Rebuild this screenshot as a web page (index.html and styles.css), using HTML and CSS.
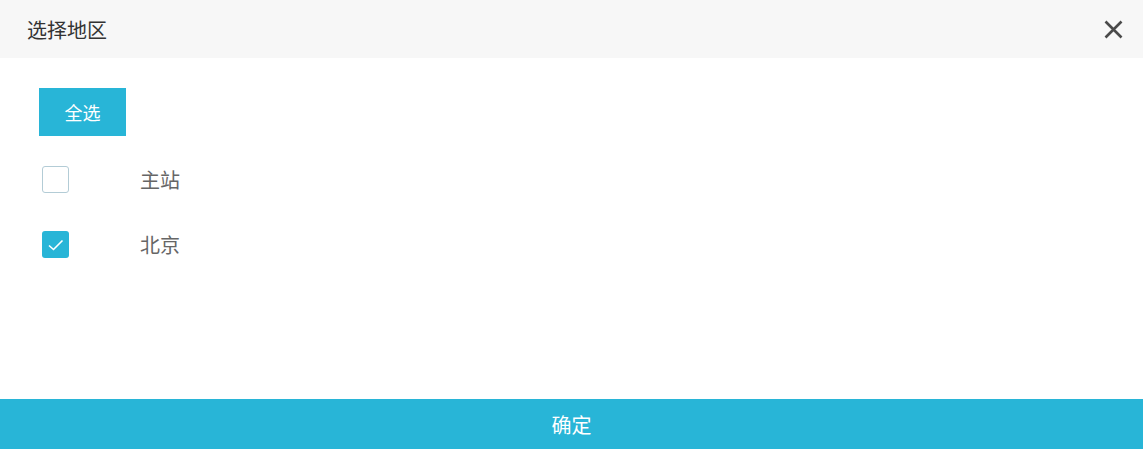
FILE: index.html
```html
<!DOCTYPE html>
<html lang="zh">
<head>
<meta charset="utf-8">
<link rel="stylesheet" href="styles.css">
</head>
<body>
<div class="dialog">
  <div class="header">
    <span class="title">选择地区</span>
    <svg class="close" width="19" height="19" viewBox="0 0 19 19"><path d="M1.5 1.5 L17.5 17.5 M17.5 1.5 L1.5 17.5" stroke="#4a4a4a" stroke-width="2.6"/></svg>
  </div>
  <div class="body">
    <button class="select-all">全选</button>
    <div class="row">
      <span class="box"></span>
      <span class="label">主站</span>
    </div>
    <div class="row">
      <span class="box checked"><svg width="27" height="27" viewBox="0 0 27 27"><path d="M7 14.5 L11.5 18.5 L20.5 9.5" fill="none" stroke="#fff" stroke-width="1.6"/></svg></span>
      <span class="label">北京</span>
    </div>
  </div>
  <div class="footer">确定</div>
</div>
</body>
</html>
```
FILE: styles.css
```css
html, body {
  margin: 0;
  padding: 0;
  background: #fff;
}
body {
  font-family: "Noto Sans CJK SC", "Liberation Sans", sans-serif;
}
.dialog {
  width: 1143px;
  height: 449px;
  display: flex;
  flex-direction: column;
}
.header {
  height: 58px;
  background: #f7f7f7;
  display: flex;
  align-items: center;
  justify-content: space-between;
  padding: 0 20px 0 27px;
  box-sizing: border-box;
}
.title {
  font-size: 20px;
  color: #333;
}
.close {
  display: block;
}
.body {
  flex: 1;
  padding: 30px 39px 0;
  display: flex;
  flex-direction: column;
  align-items: flex-start;
}
.select-all {
  width: 87px;
  height: 48px;
  border: none;
  background: #28b5d7;
  color: #fff;
  font-family: inherit;
  font-size: 18px;
  padding: 0;
  margin-bottom: 30px;
}
.row {
  display: flex;
  align-items: center;
  height: 27px;
  margin-bottom: 38px;
  padding-left: 3px;
}
.box {
  width: 27px;
  height: 27px;
  box-sizing: border-box;
  border: 1px solid #b3ccd6;
  border-radius: 3px;
  display: flex;
  align-items: center;
  justify-content: center;
  margin-right: 71px;
  background: #fff;
  position: relative;
}
.box.checked {
  background: #28b5d7;
  border: none;
}
.label {
  font-size: 20px;
  color: #666;
}
.footer {
  height: 50px;
  background: #28b5d7;
  color: #fff;
  font-size: 20px;
  display: flex;
  align-items: center;
  justify-content: center;
}
```
